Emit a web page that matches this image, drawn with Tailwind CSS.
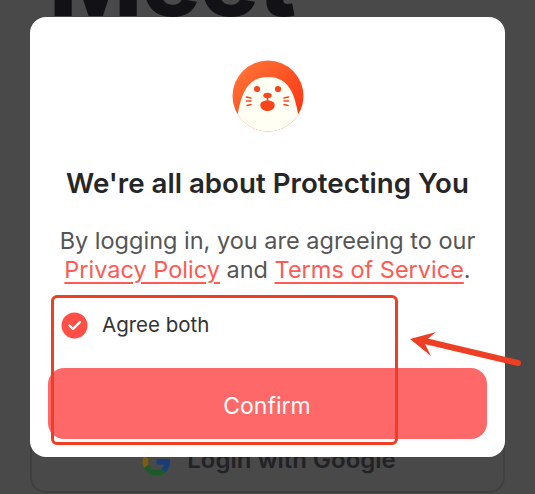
<!doctype html>
<html>
<head>
<meta charset="utf-8">
<script src="https://cdn.jsdelivr.net/npm/@tailwindcss/browser@4"></script>
</head>
<body class="m-0">
<div class="relative w-[535px] h-[494px] overflow-hidden bg-[#494949] font-['Inter',sans-serif]">
  <!-- page behind the dim layer -->
  <div class="absolute left-[49px] top-[-69px] text-[99px] leading-[98px] font-extrabold tracking-[-1px] text-[#111116]">Meet</div>
  <div class="absolute left-[30px] top-[400px] w-[475px] h-[93px] rounded-[16px] border-2 border-[#404040] flex items-end justify-center gap-[15px] pb-[17px] pl-[2px]">
    <svg width="31" height="31" viewBox="0 0 48 48" class="mb-[-3px]">
      <path fill="#1a3d7a" d="M45 24.500c0-1.600-.1-3.100-.4-4.500H24v8.500h11.800c-.5 2.700-2 5-4.400 6.600l6.900 5.400C42.300 36.800 45 31.200 45 24.500z"/>
      <path fill="#1d5a2b" d="M24 46c5.900 0 10.900-2 14.300-5.400l-6.900-5.400c-1.900 1.300-4.400 2-7.400 2-5.700 0-10.500-3.800-12.200-9l-7.100 5.500C8.300 41.500 15.600 46 24 46z"/>
      <path fill="#7a5c10" d="M11.800 28.700c-.9-2.700-.9-6.500 0-9.400l-7.100-5.500c-3 6-3 14.400 0 20.400z"/>
      <path fill="#7a2a20" d="M24 10.900c3.200 0 6 1.100 8.300 3.200l6.200-6.200C34.800 4.300 29.900 2 24 2 15.600 2 8.300 6.500 4.700 13.800l7.100 5.500c1.700-5.200 6.500-8.400 12.200-8.400z"/>
    </svg>
    <span class="text-[24px] leading-[28px] font-semibold text-[#222226]">Login with Google</span>
  </div>

  <!-- modal -->
  <div class="absolute left-[30px] top-[17px] w-[475px] h-[440px] rounded-[16px] bg-white flex flex-col items-center pt-[43px]">
    <svg width="72" height="72" viewBox="0 0 72 72" class="shrink-0">
      <defs>
        <linearGradient id="g" x1="0" y1="0" x2="1" y2="1">
          <stop offset="0" stop-color="#ff7a3a"/>
          <stop offset="1" stop-color="#fb2c0c"/>
        </linearGradient>
        <clipPath id="c"><circle cx="36" cy="36" r="35.500"/></clipPath>
      </defs>
      <circle cx="36" cy="36" r="35.500" fill="url(#g)"/>
      <path clip-path="url(#c)" fill="#fffff4" d="M5.500 56C9 36 14 17 36 17s27 19 30.500 39L70 74H2z"/>
      <circle cx="25" cy="29" r="3.100" fill="#f9441c"/>
      <circle cx="46" cy="29" r="3.100" fill="#f9441c"/>
      <ellipse cx="35.500" cy="35.500" rx="4.200" ry="2.700" fill="#f9441c"/>
      <rect x="34.700" y="36" width="1.600" height="5" fill="#f9441c"/>
      <path fill="#f9441c" d="M28.300 45c0-3 3-4.600 7.200-4.600s7.200 1.600 7.200 4.600c0 3.500-3.200 6-7.200 6s-7.200-2.500-7.200-6z"/>
      <path stroke="#f9441c" stroke-width="1.500" stroke-linecap="round" fill="none" d="M14.500 37l4.500 1M14.500 41h4.500M15 45.500l4-1M56.500 37l-4.500 1M56.500 41H52M56 45.500l-4-1"/>
    </svg>
    <h1 class="mt-[34px] text-[27.700px] leading-[34px] font-semibold text-[#262626] whitespace-nowrap">We're all about Protecting You</h1>
    <p class="mt-[27px] w-full text-center text-[23.500px] leading-[28.500px] text-[#555555]">
      By logging in, you are agreeing to our<br>
      <span class="text-[#ff5a52] underline underline-offset-[4px] decoration-[1.500px]">Privacy Policy</span> and <span class="text-[#ff5a52] underline underline-offset-[4px] decoration-[1.500px]">Terms of Service</span>.
    </p>
    <div class="mt-[27px] w-full flex items-center gap-[14px] pl-[31px]">
      <svg width="27" height="27" viewBox="0 0 27 27" class="shrink-0">
        <circle cx="13.500" cy="13.500" r="13" fill="#ff4f46"/>
        <path d="M8.500 13.500l3.500 3.500 7-7" fill="none" stroke="#fff" stroke-width="2.400" stroke-linecap="round" stroke-linejoin="round"/>
      </svg>
      <span class="text-[20.500px] leading-[28px] text-[#333333]">Agree both</span>
    </div>
    <button class="mt-[29px] ml-[-1px] w-[439px] h-[71px] shrink-0 rounded-[16px] bg-[#ff6868] text-white text-[23px] pt-[5px]">Confirm</button>
  </div>

  <!-- annotation -->
  <div class="absolute left-[51px] top-[295px] w-[347px] h-[150px] rounded-[6px] border-[3.500px] border-[#ee3f24]"></div>
  <svg class="absolute left-0 top-0" width="535" height="494" viewBox="0 0 535 494">
    <path d="M518 363L425 341" stroke="#ee3f24" stroke-width="6" stroke-linecap="round" fill="none"/>
    <path d="M410 339L436 332L424 342L431 356Z" fill="#ee3f24"/>
  </svg>
</div>
</body>
</html>
